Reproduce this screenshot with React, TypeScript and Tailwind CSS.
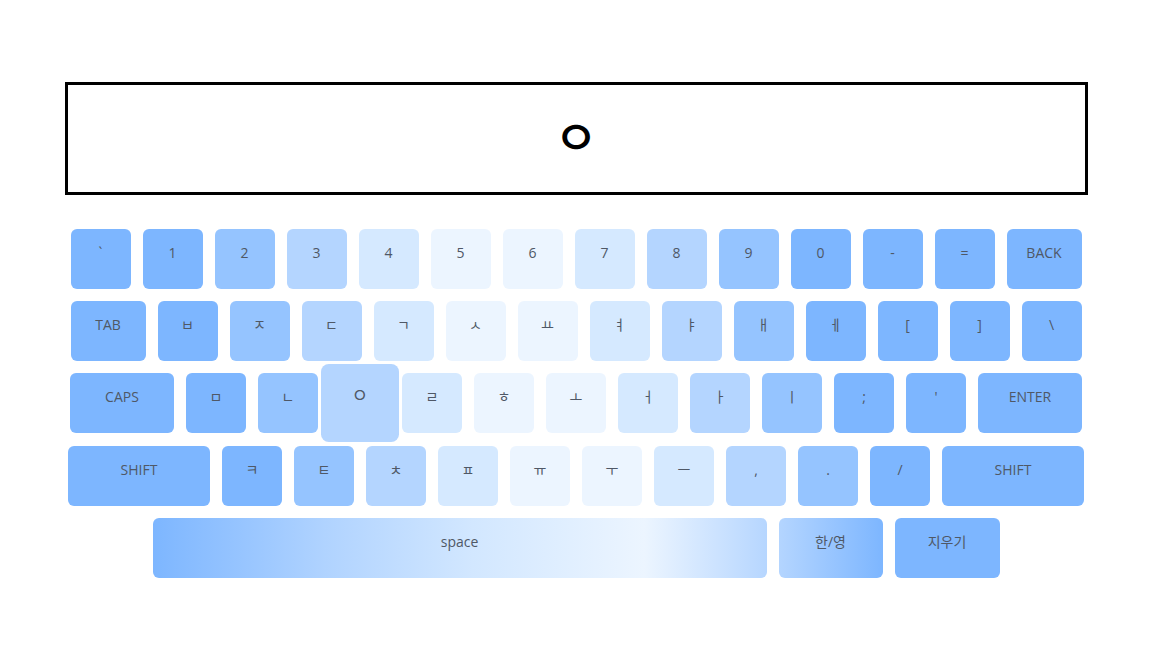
import { useState } from "react";

type Key = {
  label: string;
  w: string;
  bg: string;
};

// colour steps of the wave across the keyboard
const L0 = "bg-[#7db6ff]";
const L1 = "bg-[#95c4ff]";
const L2 = "bg-[#b4d5ff]";
const L3 = "bg-[#d5e9ff]";
const L4 = "bg-[#ecf5ff]";

const K = "w-[60px]";

const rows: Key[][] = [
  [
    { label: "`", w: K, bg: L0 },
    { label: "1", w: K, bg: L0 },
    { label: "2", w: K, bg: L1 },
    { label: "3", w: K, bg: L2 },
    { label: "4", w: K, bg: L3 },
    { label: "5", w: K, bg: L4 },
    { label: "6", w: K, bg: L4 },
    { label: "7", w: K, bg: L3 },
    { label: "8", w: K, bg: L2 },
    { label: "9", w: K, bg: L1 },
    { label: "0", w: K, bg: L0 },
    { label: "-", w: K, bg: L0 },
    { label: "=", w: K, bg: L0 },
    { label: "BACK", w: "w-[75px]", bg: L0 },
  ],
  [
    { label: "TAB", w: "w-[75px]", bg: L0 },
    { label: "ㅂ", w: K, bg: L0 },
    { label: "ㅈ", w: K, bg: L1 },
    { label: "ㄷ", w: K, bg: L2 },
    { label: "ㄱ", w: K, bg: L3 },
    { label: "ㅅ", w: K, bg: L4 },
    { label: "ㅛ", w: K, bg: L4 },
    { label: "ㅕ", w: K, bg: L3 },
    { label: "ㅑ", w: K, bg: L2 },
    { label: "ㅐ", w: K, bg: L1 },
    { label: "ㅔ", w: K, bg: L0 },
    { label: "[", w: K, bg: L0 },
    { label: "]", w: K, bg: L0 },
    { label: "\\", w: K, bg: L0 },
  ],
  [
    { label: "CAPS", w: "w-[104px]", bg: L0 },
    { label: "ㅁ", w: K, bg: L0 },
    { label: "ㄴ", w: K, bg: L1 },
    { label: "ㅇ", w: K, bg: L2 },
    { label: "ㄹ", w: K, bg: L3 },
    { label: "ㅎ", w: K, bg: L4 },
    { label: "ㅗ", w: K, bg: L4 },
    { label: "ㅓ", w: K, bg: L3 },
    { label: "ㅏ", w: K, bg: L2 },
    { label: "ㅣ", w: K, bg: L1 },
    { label: ";", w: K, bg: L0 },
    { label: "'", w: K, bg: L0 },
    { label: "ENTER", w: "w-[104px]", bg: L0 },
  ],
  [
    { label: "SHIFT", w: "w-[142px]", bg: L0 },
    { label: "ㅋ", w: K, bg: L0 },
    { label: "ㅌ", w: K, bg: L1 },
    { label: "ㅊ", w: K, bg: L2 },
    { label: "ㅍ", w: K, bg: L3 },
    { label: "ㅠ", w: K, bg: L4 },
    { label: "ㅜ", w: K, bg: L4 },
    { label: "ㅡ", w: K, bg: L3 },
    { label: ",", w: K, bg: L2 },
    { label: ".", w: K, bg: L1 },
    { label: "/", w: K, bg: L0 },
    { label: "SHIFT", w: "w-[142px]", bg: L0 },
  ],
  [
    {
      label: "space",
      w: "w-[614px]",
      bg: "bg-[linear-gradient(to_right,#7db6ff_0%,#8fc0ff_10%,#b0d3ff_28%,#d2e7ff_52%,#ecf5ff_80%,#b6d6ff_100%)]",
    },
    {
      label: "한/영",
      w: "w-[104px]",
      bg: "bg-[linear-gradient(to_right,#b4d5ff_0%,#7db6ff_100%)]",
    },
    { label: "지우기", w: "w-[105px]", bg: L0 },
  ],
];

const App = () => {
  const [text] = useState<string>("ㅇ");
  const pressed = "ㅇ";

  return (
    <div className="w-full h-[648px] bg-white pt-[82px] font-['Open_Sans','Noto_Sans_CJK_KR',sans-serif]">
      <div className="w-[1023px] h-[113px] mx-auto border-[3px] border-black flex items-center justify-center">
        <span className="text-[48px] leading-none font-medium text-black font-['Noto_Sans_CJK_KR',sans-serif] -mt-[10px]">
          {text}
        </span>
      </div>
      <div className="mt-[34px] flex flex-col gap-3">
        {rows.map((row, r) => (
          <div key={r} className={`flex justify-center gap-3 ${r === 3 ? "mt-px" : ""}`}>
            {row.map((k, i) => (
              <div
                key={i}
                className={`${k.w} ${k.bg} h-[60px] rounded-md flex justify-center pt-[14px] text-sm leading-5 text-[#4f5866] select-none ${
                  k.label === pressed && r === 2 ? "scale-[1.3]" : ""
                }`}
              >
                {k.label}
              </div>
            ))}
          </div>
        ))}
      </div>
    </div>
  );
};

export default App;
